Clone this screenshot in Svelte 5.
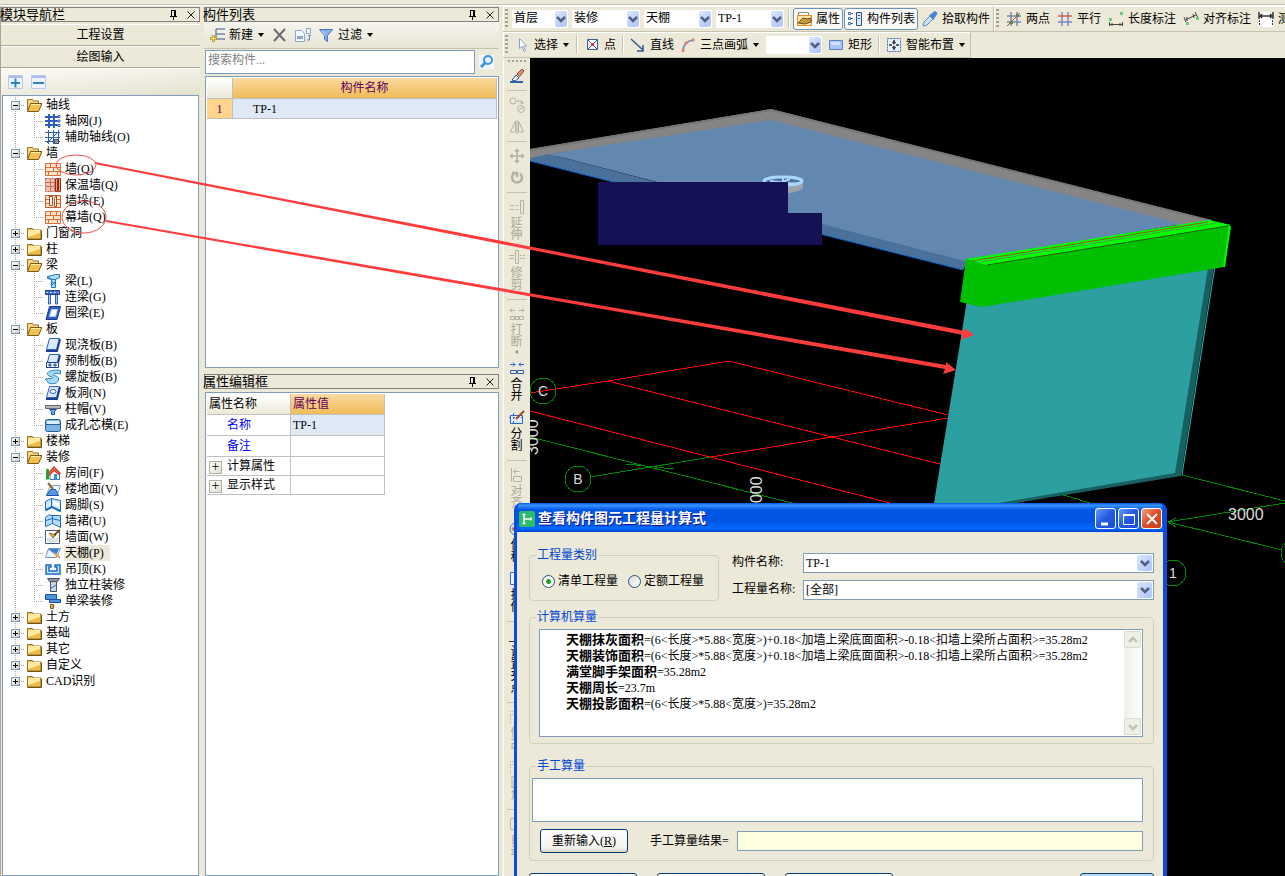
<script>
  const brick = '<path fill="#fbe3cc" stroke="#d8703c" d="M.5 2.5h15v12H.5z"/><path stroke="#d8703c" d="M1 6.5h14M1 10.5h14M5.500 3v3M11.500 3v3M8.500 7v3M3.500 11v3M12.500 11v3"/>';
  const slab = '<path fill="#dbe9ff" stroke="#2f62c4" d="M4.500 1.500h10l-3 11h-10z"/><path stroke="#1c3f96" stroke-width="2" d="M1 14h11l3-12"/>';

  const icons = {
    folder: '<path fill="#f0bc48" stroke="#96702a" d="M1.500 3.500h5l1 1.500h7.500v9h-13.500z"/><path fill="#fde9a0" d="M2 5h12v3L2 12z"/><path stroke="#6f5014" d="M1.500 14.500h14V6"/>',
    folderOpen: '<path fill="#f7d87c" stroke="#96702a" d="M1.500 13.500v-11h5l1 1.500h5v3"/><path fill="#f3c252" stroke="#7a5818" d="M1.500 14.500l3-8h11.500l-3.500 8z"/><path stroke="#fdf0b6" d="M5 7.500h9"/>',
    grid: '<path stroke="#2c5cc0" stroke-width="2" d="M4 1v14M9 1v14M0 4h13M0 8h13M0 12h13"/><path fill="#fff" stroke="#2c5cc0" d="M13 2.500h2v2h-2zM13 7h2v2h-2zM13 11.500h2v2h-2z"/>',
    auxGrid: '<path stroke="#2c5cc0" d="M3.500 1v14M8.500 1v14M13.500 1v14M0 3.500h15M0 8.500h15M0 12.500h15M2 14L13 3"/><path fill="#8a9ab8" stroke="#445" d="M9.500 10.500h4v4h-4z"/>',
    brick,
    brickCut: '<path fill="#edc0b0" stroke="#b85a4a" stroke-dasharray="2 1" d="M.5 1.500h9v13h-9z"/><path stroke="#c87058" d="M1 5.500h8M1 9.500h8M5.500 2v12"/><path fill="#f0a080" stroke="#8e2c18" d="M10.500 1.500h2v13h-2zM13.500 1.500h2v13h-2z"/>',
    pier: '<path fill="#fbe3cc" stroke="#c85a2c" d="M.5 2.500h15v12H.5z"/><path fill="#fff" stroke="#b04820" d="M4.500 3.500h3v9h-3zM9.500 5.500l2-3v11h-2z"/><path stroke="#d8703c" d="M1 6.500h3M1 10.500h3M12 6.500h3M12 10.500h3"/>',
    beam: '<path fill="#a8dcf8" stroke="#1c78c0" d="M2.500 3.500l8-2h4v3l-4 2v8h-4v-8l-4-1z"/><path stroke="#1c78c0" d="M3 4l4 2.500h4M7 9l4 3M7 12l4-4"/>',
    linkBeam: '<path fill="#3c6ad0" stroke="#1c3f96" d="M.5 1.500h14v4H.5z"/><path fill="#a8c8f8" stroke="#2f62c4" d="M3.500 6v9h2V6M10.500 6v9h2V6"/><path stroke="#cfe0ff" stroke-dasharray="2 2" d="M1 3.500h13"/>',
    ringBeam: '<path fill="#2f5ec8" stroke="#17388c" d="M4.500 1.500h11l-3.500 13h-11z"/><path fill="#fff" stroke="#a8c8f8" d="M6.500 4.500h6l-2 7h-6z"/>',
    slab,
    precast: slab + '<path fill="#fff" stroke="#1c3f96" d="M1.500 9.500h12v5h-12zM4 11h2v2H4zM9 11h2v2H9z"/>',
    spiral: '<path fill="#a4dcfa" stroke="#2080cc" d="M15.500 1.500c-6-1-13 0-13 3.500 0 3 6 2 5 4-1 1.500-4 0-7 1l3 4c5 2 10 0 10-4 0-4-7-3-5-5 1-1 4-1 7 0z"/>',
    slabHole: slab + '<ellipse cx="8" cy="6.500" rx="3" ry="2" fill="#fff" stroke="#2f62c4"/>',
    cap: '<path fill="#b8b8b8" stroke="#686868" d="M.5 4.500h15v3H.5z"/><path fill="#6aa4f0" stroke="#1c50b0" d="M4.500 8.500h7l-2 2v3h-3v-3z"/>',
    core: '<rect x=".5" y="2.500" width="15" height="12" rx="2" fill="#7ab4e6" stroke="#2c5c94"/><path fill="#dcefff" d="M2 4h12v3H2z"/><path stroke="#2c5c94" d="M1 7.500h14"/>',
    room: '<path fill="#fff" stroke="#3a78b8" d="M5 7v7.500h9.500V7L9 3z"/><path fill="#e85a44" stroke="#d0301c" d="M2.500 9L9 1.500 15.500 8.500l-2 1L9 5.500 5 10z"/><path fill="#2c9c3c" d="M1 5q2-3 3 0v9.500H1z"/><path fill="#3a8ae0" d="M9 9h3v6H9z"/>',
    floor: '<path fill="#e8f3ff" stroke="#8aa" d="M1.500 13.500l4-9h10l-3 9z"/><path fill="#5a96e8" stroke="#1c50b0" d="M1.500 14.500l4-6h5l3 6z"/><path stroke="#8c6a2c" stroke-width="2" d="M3 2l5 6"/>',
    skirting: '<path fill="#cfe6ff" stroke="#1c6cc0" d="M.5 4.500l6-3v8l-6 4zM6.500 1.500l9 2v11l-9-5z"/><path fill="#fff" d="M8 4l6 2v4L8 8z"/><path stroke="#1c6cc0" stroke-width="2" d="M1 13l6-3 8 4"/>',
    dado: '<path fill="#b4dcfa" stroke="#1c6cc0" d="M.5 4.500q3-4 7-2h8v12l-8-4-7 3z"/><path stroke="#1c6cc0" d="M7.500 2v9M1 7.500l6-2 8 2"/>',
    wallFace: '<path fill="#fff" stroke="#445a7c" d="M.5 1.500h14v13H.5z"/><path fill="#d8e0e8" d="M2 9h11v4H2z"/><path fill="#e0b850" stroke="#8c6a2c" d="M4 4l4 5 3-3z"/><path stroke="#6c4a1c" stroke-width="2" d="M9 6l6-5"/>',
    ceiling: '<path fill="#e8f3ff" stroke="#7a92a8" d="M.5 12.500l3-9h12l-4 9z"/><path fill="#3c7ae0" d="M3 4h11l-3 6z"/><path stroke="#d8a848" stroke-width="2" d="M9 8l6 5"/>',
    suspended: '<path fill="#cfe6ff" stroke="#1c6cc0" stroke-width="1.500" d="M1 4h5v2H4v4h8V6h-2V4h5v9H1z"/>',
    column: '<path fill="#8e98a4" stroke="#48525e" d="M2.500 1.500h12l-2 3h-8z"/><path fill="#c8d4e0" stroke="#48525e" d="M5.500 4.500h6v10h-6z"/><path stroke="#2c6cc8" d="M5 12l6-4"/>',
    beamFinish: '<path fill="#4a94dc" stroke="#1c50a0" d="M.5 1.500h11v5H.5zM4.500 6.500h11v3h-11z"/><path fill="#e0a860" stroke="#8c5a1c" d="M5.500 11.500h3v4h-3z"/>',
    plus: '<path fill="#eef3fc" stroke="#b9c9ea" d="M.5 1.500h14v13H.5z"/><path fill="#a9bdf0" d="M1 2h13v2H1z"/><path stroke="#2c84c8" stroke-width="2" d="M3 9h9M7.500 4.500v9"/>',
    minus: '<path fill="#eef3fc" stroke="#b9c9ea" d="M.5 1.500h14v13H.5z"/><path fill="#a9bdf0" d="M1 2h13v2H1z"/><path stroke="#2c84c8" stroke-width="2" d="M2 9h11"/>',
    add: '<path stroke="#7088a8" stroke-width="1.500" d="M7 2h9M7 7h9M7 12h9M7 2v10"/><path fill="#fbe38a" stroke="#c0982c" d="M3.500 8.500h2v2h2v2h-2v2h-2v-2h-2v-2h2z"/>',
    remove: '<path stroke="#6c6c6c" stroke-width="2" d="M2 2l11 12M13 2L2 14"/>',
    copyTo: '<path fill="#f4f8ff" stroke="#8ca4cc" d="M.5 3.500h6l3 3v8h-9zM11.500 1.500h4v5h-4z"/><path fill="#8ca4cc" d="M2 9h6v3H2z"/><path stroke="#6888c0" d="M12 13h2.500V9M13 8.500h3"/>',
    funnel: '<path fill="#86aef0" stroke="#4a74c4" d="M1.500 2.500h13l-5 6v6l-3-2v-4z"/><path stroke="#d4e4ff" d="M4 4l3.500 4"/>',
    search: '<path fill="#f0f6ff" d="M0 1h15v14H0z"/><circle cx="9" cy="6" r="4" fill="#e4f2ff" stroke="#3a94e0" stroke-width="2"/><path stroke="#3a94e0" stroke-width="3" d="M6 9l-4 4"/>',
    props: '<path fill="#fff" stroke="#8a8a8a" d="M2.500 1.500h10v4h-10z"/><path fill="#ffe2a8" stroke="#e08a20" d="M1.500 4.500h14v10h-14z"/><path fill="#c89a3c" stroke="#6a5420" d="M2 12l5-5 4 1 4-1v4l-6 2z"/>',
    list: '<path stroke="#3c6cb4" stroke-dasharray="2 1" d="M1 2.500h6M1 7.500h6M1 12.500h6"/><path fill="#fff" stroke="#3c6cb4" d="M1.500 1.500h2v2h-2zM1.500 6.500h2v2h-2zM1.500 11.500h2v2h-2z"/><path fill="#dce8fc" stroke="#2c4c94" d="M9.500 1.500h5v13h-5z"/><path stroke="#2c4c94" d="M11 4.500h2M11 7.500h2"/>',
    picker: '<path fill="#cfe4fb" stroke="#5a8cc8" d="M1 15l1-4 6-6 3 3-6 6z"/><path fill="#4a84d0" d="M7 4l2-1 3-2.500c2-1 4 1 3 3L12.500 7l-.5 2z"/>',
    twoPoint: '<path stroke="#7c84b8" stroke-width="1.500" d="M5 1v14M11 1v14M1 5h14M1 11h14"/><path stroke="#e03838" d="M1 15L14 2"/><path fill="#5a8a3c" d="M4 10h3v3H4zM10 3h3v3h-3z"/>',
    parallel: '<path stroke="#7c84c8" stroke-width="1.500" d="M5 1v14M11 1v14M1 11h14"/><path stroke="#e05858" stroke-width="1.500" d="M1 5h14"/>',
    lengthDim: '<path fill="#6cc87c" d="M1 7h3v3H1zM12 1h3v3h-3z"/><path stroke="#444" d="M1.500 11v4M14.500 11v4M1.500 13.500h13M4 12v3M12 12v3"/>',
    alignDim: '<path stroke="#444" d="M2 9l11-5M1 6l2 5M12 1l3 6M4 6v4M10 3l1 4"/><path fill="#6cc87c" d="M3 11h3v3H3zM13 6h3v3h-3z"/>',
    measure: '<path fill="#fff" d="M0 1h16v15H0z"/><path stroke="#333" stroke-width="1.500" d="M1 1v7M15 1v7M1 5h14M4 3L2 5l2 2M12 3l2 2-2 2"/><path stroke="#333" stroke-dasharray="2 1" d="M1.500 9v6M14.500 9v6"/>',
    cursor: '<path fill="#fff" stroke="#8ca0c4" d="M5.500 1.500v10l2.500-2 2 5 1.500-1-2-4.500h3z"/>',
    point: '<path fill="#f4f8ff" stroke="#3c5c94" d="M3.500 2.500h10v10h-10z"/><path stroke="#3c5c94" d="M4 3l9 9M13 3l-9 9"/><path fill="#e03838" d="M7 6h3v3H7z"/>',
    line: '<path stroke="#34588c" stroke-width="1.500" d="M1 2l12 11M13 8v6H7"/>',
    arc: '<path stroke="#6c84a8" stroke-width="1.500" d="M3 14q0-9 10-11"/><path fill="#f8d0c8" stroke="#e07060" d="M2 12.500h2v2H2zM5 5h2v2H5zM12 2h2v2h-2z"/>',
    rect: '<path fill="#a8c4fa" stroke="#5a84d0" d="M1.500 3.500h13v9h-13z"/><path fill="#d4e4ff" d="M3 5h9v3H3z"/>',
    smart: '<path fill="#e4eefc" stroke="#4c6ca8" stroke-dasharray="2 1" d="M1.500 1.500h13v13h-13z"/><path stroke="#333" stroke-width="1.500" d="M8 3v3M8 10v3M3 8h3M10 8h3M6.500 5L8 6.500 9.500 5M6.500 11L8 9.500 9.500 11"/>',
    eraser: '<path stroke="#2c64b4" stroke-width="2" d="M1 14h13"/><path fill="#fff" stroke="#2c4c94" d="M3 12l4-5 3 3-4 3z"/><path fill="#f08a70" stroke="#7a4a3c" d="M8 6l5-5 2 2-4.500 5.500z"/>',
    copy: '<circle cx="4" cy="4" r="3"/><circle cx="12" cy="12" r="3.500"/><path d="M8 4h5v3M11 5l2 2 2-2M10 13l4-3"/>',
    mirror: '<path d="M6.500 2v11h-5zM9.500 2v11h5zM8 1v14"/>',
    move: '<path stroke-width="1.500" d="M8 1v14M1 8h14M6 3.500l2-2 2 2M6 12.500l2 2 2-2M3.500 6l-2 2 2 2M12.500 6l2 2-2 2"/>',
    rotate: '<path stroke-width="2.500" d="M11 3.500a5 5 0 1 1-6 0M3 3h5v4"/>',
    extend: '<path d="M1 6.500h4M1 10.500h4M7 6.500h2M7 10.500h2M11.500 1.500h3v13h-3z"/>',
    trim: '<path d="M0 6.500h5M0 9.500h5M6.500 1.500h3v13h-3zM11 6.500h2M14 6.500h2M11 9.500h2M14 9.500h2"/>',
    breakUp: '<path d="M1 4.500h5M3 2.500l-2 2 2 2M10 4.500h5M13 2.500l2 2-2 2M1.500 10.500h4v3h-4zM6.500 10.500h3v3h-3zM10.500 10.500h4v3h-4z"/>',
    merge: '<path stroke="#2c64d0" d="M1 4.500h5M4 2.500l2 2-2 2M10 4.500h5M12 2.500l-2 2 2 2"/><path fill="#dfeafc" stroke="#3c5c94" d="M1.500 10.500h6v3h-6zM8.500 10.500h6v3h-6z"/>',
    split: '<path fill="#dfeafc" stroke="#2c64d0" d="M1.500 5.500h12v8h-12z"/><path stroke="#2c64d0" stroke-dasharray="2 2" d="M0 7.500h15M4.500 3v12"/><path stroke="#9c4c20" stroke-width="2" d="M7 9l8-8"/>',
    align: '<path d="M2.500 1v14M4.500 9.500h8v5h-8zM4.500 4.500h6M7 2L4.500 4.500 7 7"/>',
    offset: '<circle cx="7" cy="8" r="6" stroke="#4c6ca8"/><circle cx="5" cy="8" r="2" fill="#e03838"/>',
    stretch: '<path fill="#eaf2ff" stroke="#3c6cb4" d="M1.500 1.500h12v12h-12z"/>',
    grip: '<path stroke="#333" d="M0 13.500h14M7 8v5"/>',
    dotted: '<path stroke-dasharray="1 1" d="M1 2.500h12M1 5.500h10M1.500 6v9"/>',
    block: '<path d="M1.500 2.500h12v11h-12z"/>',
    down: '<path stroke="#4d6185" stroke-width="2.500" d="M4 6l4 4 4-4"/>',
    scrollUp: '<path stroke="#c3c3b5" stroke-width="2.500" d="M4 10l4-4 4 4"/>',
    scrollDown: '<path stroke="#c3c3b5" stroke-width="2.500" d="M4 6l4 4 4-4"/>',
    pin: '<path stroke="#000" d="M5.500 3v6M6 3.500h4M4 9.500h7M7.500 10v3"/><path stroke="#000" stroke-width="2" d="M9 3v6"/>',
    close: '<path stroke="#222" d="M4.500 4.500l7 7M11.500 4.500l-7 7"/>',
    app: '<rect x="0" y="0" width="16" height="16" rx="2" fill="#2cbc6c"/><path stroke="#fff" stroke-width="1.500" d="M5 3v10M5 8h7M3.500 3.500h3M3.500 12.500h3M12 6.500v3"/>',
    winMin: '<path stroke="#fff" stroke-width="3" d="M3 13h7"/>',
    winMax: '<path stroke="#fff" d="M2.500 3.500h11v10h-11z"/><path stroke="#fff" stroke-width="2" d="M2 4h12"/>',
    winClose: '<path stroke="#fff" stroke-width="2" d="M3 3l10 10M13 3L3 13"/>'
  };

  const tree = $state([
    { label: '轴线', open: true, items: [['grid', '轴网(J)'], ['auxGrid', '辅助轴线(O)']] },
    {
      label: '墙',
      open: true,
      items: [['brick', '墙(Q)'], ['brickCut', '保温墙(Q)'], ['pier', '墙垛(E)'], ['brick', '幕墙(Q)']]
    },
    { label: '门窗洞', open: false },
    { label: '柱', open: false },
    { label: '梁', open: true, items: [['beam', '梁(L)'], ['linkBeam', '连梁(G)'], ['ringBeam', '圈梁(E)']] },
    {
      label: '板',
      open: true,
      items: [
        ['slab', '现浇板(B)'],
        ['precast', '预制板(B)'],
        ['spiral', '螺旋板(B)'],
        ['slabHole', '板洞(N)'],
        ['cap', '柱帽(V)'],
        ['core', '成孔芯模(E)']
      ]
    },
    { label: '楼梯', open: false },
    {
      label: '装修',
      open: true,
      items: [
        ['room', '房间(F)'],
        ['floor', '楼地面(V)'],
        ['skirting', '踢脚(S)'],
        ['dado', '墙裙(U)'],
        ['wallFace', '墙面(W)'],
        ['ceiling', '天棚(P)'],
        ['suspended', '吊顶(K)'],
        ['column', '独立柱装修'],
        ['beamFinish', '单梁装修']
      ]
    },
    { label: '土方', open: false },
    { label: '基础', open: false },
    { label: '其它', open: false },
    { label: '自定义', open: false },
    { label: 'CAD识别', open: false }
  ]);

  // null is a separator
  const editTools = [
    { icon: 'eraser', on: true, title: '删除' },
    null,
    { icon: 'copy', title: '复制' },
    { icon: 'mirror', title: '镜像' },
    null,
    { icon: 'move', title: '移动' },
    { icon: 'rotate', title: '旋转' },
    null,
    { icon: 'extend', text: '延伸' },
    { icon: 'trim', text: '修剪' },
    null,
    { icon: 'breakUp', text: '打断', menu: true },
    { icon: 'merge', text: '合并', on: true },
    { icon: 'split', text: '分割', on: true },
    null,
    { icon: 'align', text: '对齐', menu: true },
    { icon: 'offset', text: '偏移', on: true },
    { icon: 'stretch', text: '拉伸', on: true },
    null,
    { icon: 'grip', text: '设置夹点', on: true },
    null,
    { icon: 'dotted', text: '修改' },
    { icon: 'dotted', text: '圆角' },
    null,
    { icon: 'block', text: '自动' }
  ];

  const results = [
    ['天棚抹灰面积', '=(6<长度>*5.88<宽度>)+0.18<加墙上梁底面面积>-0.18<扣墙上梁所占面积>=35.28m2'],
    ['天棚装饰面积', '=(6<长度>*5.88<宽度>)+0.18<加墙上梁底面面积>-0.18<扣墙上梁所占面积>=35.28m2'],
    ['满堂脚手架面积', '=35.28m2'],
    ['天棚周长', '=23.7m'],
    ['天棚投影面积', '=(6<长度>*5.88<宽度>)=35.28m2']
  ];

  let selected = $state('天棚(P)');
  let kind = $state('bill');
</script>

{#snippet icon(name)}
  <svg class="icon" viewBox="0 0 16 16" fill="none" aria-hidden="true">{@html icons[name]}</svg>
{/snippet}

{#snippet combo(value, label, id)}
  <span class="combo">
    <select {id} aria-label={label}><option>{value}</option></select>
    <span class="arrow">{@render icon('down')}</span>
  </span>
{/snippet}

{#snippet tool(name, text, menu)}
  <button class="tool" aria-label={text}>
    {@render icon(name)}
    {#if text}<span>{text}</span>{/if}
    {#if menu}<i class="caret"></i>{/if}
  </button>
{/snippet}

{#snippet caption(text)}
  <header class="caption">
    <h2>{text}</h2>
    <button aria-label="固定">{@render icon('pin')}</button>
    <button aria-label="关闭">{@render icon('close')}</button>
  </header>
{/snippet}

<div class="app">
  <div class="strip"></div>

  <div class="columns">
    <nav class="navigator">
      {@render caption('模块导航栏')}
      <button class="section">工程设置</button>
      <button class="section">绘图输入</button>
      <div class="tree-tools">
        <button aria-label="展开">{@render icon('plus')}</button>
        <button aria-label="折叠">{@render icon('minus')}</button>
      </div>
      <ul class="tree">
        {#each tree as group}
          <li>
            <div class="branch">
              <button
                class="toggle"
                class:open={group.open}
                aria-label={group.label}
                aria-expanded={group.open}
                onclick={() => (group.open = !group.open)}
              ></button>
              {@render icon(group.open ? 'folderOpen' : 'folder')}
              <span>{group.label}</span>
            </div>
            {#if group.open && group.items}
              <ul>
                {#each group.items as [name, label]}
                  <li class="leaf">
                    {@render icon(name)}
                    <button class:selected={selected === label} onclick={() => (selected = label)}>{label}</button>
                  </li>
                {/each}
              </ul>
            {/if}
          </li>
        {/each}
      </ul>
    </nav>

    <aside class="panels">
      <section class="components">
        {@render caption('构件列表')}
        <div class="list-tools">
          {@render tool('add', '新建', true)}
          <button class="tool" aria-label="删除">{@render icon('remove')}</button>
          <button class="tool" aria-label="复制">{@render icon('copyTo')}</button>
          {@render tool('funnel', '过滤', true)}
        </div>
        <div class="search">
          <input type="text" placeholder="搜索构件..." aria-label="搜索构件" />
          <button aria-label="搜索">{@render icon('search')}</button>
        </div>
        <div class="sheet">
          <table class="names">
            <thead>
              <tr><th class="corner"></th><th class="hot">构件名称</th></tr>
            </thead>
            <tbody>
              <tr><td class="num">1</td><td class="current">TP-1</td></tr>
            </tbody>
          </table>
        </div>
      </section>

      <section class="properties">
        {@render caption('属性编辑框')}
        <div class="sheet">
          <table class="props">
            <thead>
              <tr><th class="corner">属性名称</th><th class="hot">属性值</th></tr>
            </thead>
            <tbody>
              <tr><td class="blue">名称</td><td class="current">TP-1</td></tr>
              <tr><td class="blue">备注</td><td></td></tr>
              <tr class="more"><td><button aria-label="展开计算属性">+</button>计算属性</td><td></td></tr>
              <tr class="more"><td><button aria-label="展开显示样式">+</button>显示样式</td><td></td></tr>
            </tbody>
          </table>
        </div>
      </section>
    </aside>

    <main>
      <div class="bars">
        <div class="bar pick">
          <i class="handle"></i>
          {@render combo('首层', '楼层')}
          {@render combo('装修', '类别')}
          {@render combo('天棚', '构件类型')}
          {@render combo('TP-1', '构件')}
          <i class="sep"></i>
          <div class="pressed">
            {@render tool('props', '属性')}
            {@render tool('list', '构件列表')}
          </div>
          {@render tool('picker', '拾取构件')}
        </div>
        <div class="bar dims">
          <i class="handle"></i>
          {@render tool('twoPoint', '两点')}
          {@render tool('parallel', '平行')}
          {@render tool('lengthDim', '长度标注')}
          {@render tool('alignDim', '对齐标注')}
          {@render tool('measure', '测量距离')}
        </div>
      </div>
      <div class="bars">
        <div class="bar draw">
          <i class="handle"></i>
          {@render tool('cursor', '选择', true)}
          <i class="sep"></i>
          {@render tool('point', '点')}
          <i class="sep"></i>
          {@render tool('line', '直线')}
          {@render tool('arc', '三点画弧', true)}
          {@render combo('', '画弧方式')}
          {@render tool('rect', '矩形')}
          <i class="sep"></i>
          {@render tool('smart', '智能布置', true)}
        </div>
      </div>

      <div class="work">
        <div class="edit-bar">
          <i class="handle flat"></i>
          {#each editTools as item}
            {#if item}
              <button class="edit" class:on={item.on} aria-label={item.text ?? item.title}>
                {@render icon(item.icon)}
                {#if item.text}<span>{item.text}</span>{/if}
                {#if item.menu}<i class="side-caret"></i>{/if}
              </button>
            {:else}
              <i class="rule"></i>
            {/if}
          {/each}
        </div>

        <svg class="scene" role="img" aria-label="三维视图">
          <g transform="translate(-530 -58)" fill="none">
            <g shape-rendering="crispEdges">
              <path stroke="#f00" d="M530 393L608 381 729 361 948 415M608 381L940 464M530 411L890 503M948 418L711 457" />
              <path
                stroke="#008a00"
                d="M711 457L590 477M530 437L792 503M626 464L674 469M1182 475L1285 501M1060 494L1090 503M1168 522L1285 503M1168 522L1282 550M1168 522l8 -4M1168 522l8 5"
              />
              <circle cx="543" cy="391" r="13" stroke="#008a00" />
              <circle cx="578" cy="479" r="13" stroke="#008a00" />
              <circle cx="1173" cy="573" r="13" stroke="#008a00" />
              <circle cx="1294" cy="553" r="13" stroke="#008a00" />
            </g>
            <path fill="#858585" d="M530 149L771 109 1212 221 1180 226 771 121 530 161z" />
            <path fill="#6388b0" d="M549 154L771 120 1182 224 966 262z" />
            <path fill="#4a7199" d="M530 158L549 154 656 182 822 224 968 262 963 270 530 161z" />
            <path stroke="#0a62c8" d="M530 161L963 270" />
            <path stroke="#777" stroke-width="2" d="M530 150L771 110 1212 221" />
            <path fill="#9aa4ae" d="M764 182v7q18 9 39 0v-6z" />
            <ellipse cx="783" cy="181" rx="19" ry="4" fill="#4a7199" stroke="#a9d6ff" stroke-width="3" />
            <path stroke="#a9d6ff" stroke-width="2" d="M783 177v10M770 181l26 3M790 179l-14 6" />
            <path fill="#141255" d="M598 182H788V213H822V245H598z" />
            <path fill="#2ca0a0" d="M967 300L1210 265 1177 475 1002 503H934z" />
            <path fill="#176060" d="M1208 268L1214 266 1181 476 1016 503H999L1175 473z" />
            <path stroke="#35b5b5" d="M1215 266L1182 475" />
            <path fill="#00c000" d="M966 259L1230 225 1224 267 982 307 960 302z" />
            <path fill="#0f0" d="M966 259L1209 220 1231 225 987 265z" />
            <path stroke="#8a5a00" d="M972 261L1208 222" />
            <path stroke="#4e9a4e" d="M980 262L1216 223" />
            <path stroke="#245c00" d="M987 265L1228 226" />
            <path stroke="#0f0" stroke-width="2" d="M1230 226L1224 267" />
            <g class="marks">
              <text x="543" y="396" text-anchor="middle">C</text>
              <text x="578" y="484" text-anchor="middle">B</text>
              <text x="1173" y="578" text-anchor="middle">1</text>
              <text class="big" x="1228" y="520">3000</text>
              <text class="big" transform="translate(538 455) rotate(-90)">3000</text>
              <text class="big" transform="translate(762 512) rotate(-90)">3000</text>
            </g>
          </g>
        </svg>
      </div>
    </main>
  </div>

  <div class="dialog" role="dialog" aria-labelledby="dialog-title">
    <header>
      {@render icon('app')}
      <h1 id="dialog-title">查看构件图元工程量计算式</h1>
      <button aria-label="最小化">{@render icon('winMin')}</button>
      <button aria-label="最大化">{@render icon('winMax')}</button>
      <button class="quit" aria-label="关闭">{@render icon('winClose')}</button>
    </header>

    <div class="body">
      <div class="top">
        <fieldset class="kind">
          <legend>工程量类别</legend>
          <div class="radios">
            <label><input type="radio" value="bill" bind:group={kind} />清单工程量</label>
            <label><input type="radio" value="quota" bind:group={kind} />定额工程量</label>
          </div>
        </fieldset>
        <div class="fields">
          <label for="part">构件名称:</label>
          {@render combo('TP-1', '构件名称', 'part')}
          <label for="amount">工程量名称:</label>
          {@render combo('[全部]', '工程量名称', 'amount')}
        </div>
      </div>

      <fieldset class="machine">
        <legend>计算机算量</legend>
        <div class="output">
          <div class="lines">
            {#each results as [name, formula]}
              <p><b>{name}</b>{formula}</p>
            {/each}
          </div>
          <div class="scroll">
            <button disabled aria-label="向上">{@render icon('scrollUp')}</button>
            <button disabled aria-label="向下">{@render icon('scrollDown')}</button>
          </div>
        </div>
      </fieldset>

      <fieldset class="manual">
        <legend>手工算量</legend>
        <textarea aria-label="手工算量"></textarea>
        <div class="sum">
          <button class="push">重新输入(<u>R</u>)</button>
          <label for="sum">手工算量结果=</label>
          <input id="sum" type="text" readonly />
        </div>
      </fieldset>

      <div class="actions">
        <button class="push" aria-label="查看计算规则"></button>
        <button class="push" aria-label="查看三维扣减图"></button>
        <button class="push" aria-label="显示详细计算式"></button>
        <button class="push focus" aria-label="关闭"></button>
      </div>
    </div>
  </div>

  <svg class="notes" fill="none" aria-hidden="true">
    <g stroke="#f05050">
      <ellipse cx="76" cy="165" rx="20" ry="10" />
      <ellipse cx="84" cy="217" rx="22" ry="16" />
    </g>
    <g fill="#ff3c3c">
      <path d="M95 162L965 331V328L974 335 961 340 963 335 95 164z" />
      <path d="M106 220L946 365V362L956 370 943 374 945 369 106 222z" />
    </g>
  </svg>
</div>

<style>
  :global(body) {
    margin: 0;
  }

  .app {
    position: relative;
    display: flex;
    flex-direction: column;
    height: 100vh;
    overflow: hidden;
    background: #ece9d8;
    color: #000;
    font: 12px/16px 'Liberation Serif', 'Noto Sans CJK SC', serif;
  }

  .app :is(button, input, select, textarea) {
    font: inherit;
    color: inherit;
    box-sizing: border-box;
    margin: 0;
  }

  button {
    padding: 0;
    border: 0;
    background: none;
    white-space: nowrap;
  }

  .icon {
    display: block;
    flex: none;
    width: 16px;
    height: 16px;
  }

  .strip {
    flex: none;
    height: 6px;
    box-sizing: border-box;
    border-bottom: 1px solid #fff;
    box-shadow: inset 0 -1px #c5c2b0;
  }

  .columns {
    flex: 1;
    min-height: 0;
    display: flex;
  }

  .navigator {
    flex: none;
    width: 200px;
    display: flex;
    flex-direction: column;
    padding-top: 1px;
    box-sizing: border-box;
    border-left: 1px solid #aca899;
  }

  .caption {
    flex: none;
    display: flex;
    align-items: center;
    height: 15px;
    box-sizing: border-box;
    border: 1px solid #808080;
  }

  .caption h2 {
    flex: 1;
    margin: 0 0 0 -2px;
    font-size: 13px;
    font-weight: normal;
    line-height: 13px;
  }

  .caption button {
    margin-left: 1px;
  }

  .section {
    flex: none;
    height: 22px;
    border-top: 1px solid #fff;
    border-bottom: 1px solid #aca899;
  }

  .caption + .section {
    margin-top: 2px;
  }

  .tree-tools {
    flex: none;
    display: flex;
    align-items: center;
    gap: 7px;
    height: 27px;
    padding-left: 7px;
    background: linear-gradient(175deg, #fbfaf6, #eceadc 70%, #e2dfca);
    border-top: 1px solid #fff;
    box-sizing: border-box;
  }

  .tree,
  .tree ul {
    margin: 0;
    padding: 0;
    list-style: none;
  }

  .tree {
    flex: 1;
    margin: 0 1px;
    padding-top: 1px;
    background: #fff;
    border: 1px solid #7f9db9;
    overflow: hidden;
  }

  .tree > li {
    background: repeating-linear-gradient(#a8a898 0 1px, #fff 1px 2px) 12px 0 / 1px 100% no-repeat;
  }

  .tree > li:last-child {
    background-size: 1px 8px;
  }

  .branch {
    display: flex;
    align-items: center;
    height: 16px;
    padding-left: 8px;
    background: repeating-linear-gradient(90deg, #a8a898 0 1px, #fff 1px 2px) 12px 8px / 10px 1px no-repeat;
  }

  .branch .icon {
    margin: 0 4px 0 6px;
  }

  .toggle {
    width: 9px;
    height: 9px;
    border: 1px solid #7b9cb8;
    background:
      linear-gradient(#000, #000) center / 5px 1px no-repeat,
      linear-gradient(#000, #000) center / 1px 5px no-repeat,
      linear-gradient(135deg, #fff, #d2cfbe);
  }

  .toggle.open {
    background:
      linear-gradient(#000, #000) center / 5px 1px no-repeat,
      linear-gradient(135deg, #fff, #d2cfbe);
  }

  .leaf {
    display: flex;
    align-items: center;
    height: 16px;
    padding-left: 42px;
    background:
      repeating-linear-gradient(#a8a898 0 1px, #fff 1px 2px) 31px 0 / 1px 100% no-repeat,
      repeating-linear-gradient(90deg, #a8a898 0 1px, transparent 1px 2px) 31px 8px / 10px 1px no-repeat;
  }

  .leaf:last-child {
    background-size:
      1px 8px,
      10px 1px;
  }

  .leaf button {
    margin-left: 3px;
    padding: 0 6px 0 1px;
    line-height: 16px;
  }

  .leaf button.selected {
    background: #ece9d8;
  }

  .panels {
    flex: none;
    width: 295px;
    margin: 0 4px;
    display: flex;
    flex-direction: column;
    padding-top: 1px;
    box-sizing: border-box;
  }

  .components {
    flex: 361;
    display: flex;
    flex-direction: column;
    min-height: 0;
  }

  .properties {
    flex: 502;
    display: flex;
    flex-direction: column;
    min-height: 0;
    margin-top: 6px;
  }

  .properties .sheet {
    margin-top: 3px;
  }

  .list-tools {
    flex: none;
    display: flex;
    align-items: center;
    gap: 7px;
    height: 27px;
    padding-left: 5px;
    background: linear-gradient(#f6f5ee, #e8e5d4);
    border-bottom: 1px solid #c5c2b0;
    box-sizing: border-box;
  }

  .tool {
    display: flex;
    align-items: center;
    gap: 4px;
    flex: none;
  }

  .caret {
    margin: 0 1px;
    border: 3px solid transparent;
    border-top: 4px solid #000;
    border-bottom: 0;
  }

  .search {
    flex: none;
    display: flex;
    align-items: center;
    gap: 4px;
    padding: 1px 4px 2px 1px;
  }

  .search input {
    flex: 1;
    min-width: 0;
    height: 24px;
    padding: 0 2px 4px;
    border: 1px solid #7f9db9;
    background: #fff;
    outline: 0;
  }

  .search input::placeholder {
    color: #808080;
    opacity: 1;
  }

  .sheet {
    flex: 1;
    min-height: 0;
    overflow: hidden;
    margin: 0 0 0 1px;
    padding: 1px;
    background: #fff;
    border: 1px solid #7f9db9;
  }

  table {
    border-collapse: separate;
    border-spacing: 0;
    table-layout: fixed;
  }

  th,
  td {
    box-sizing: border-box;
    height: 21px;
    padding: 0 2px;
    border: 0 solid #c0c0c0;
    border-width: 0 1px 1px 0;
    font-weight: normal;
    line-height: 16px;
    text-align: left;
  }

  .names {
    width: 100%;
  }

  .names td {
    height: 20px;
  }

  .corner {
    background: linear-gradient(#fff, #ece9d8);
  }

  .hot {
    background: linear-gradient(#fbd9a0, #f0bc58);
    color: #600060;
  }

  .names .corner {
    width: 26px;
  }

  .names .hot,
  .names .num {
    text-align: center;
  }

  .names .num {
    background: #ffd48c;
    color: #600060;
  }

  .current {
    background: #dfe9f6;
  }

  .names .current {
    padding-left: 20px;
  }

  .props {
    width: 178px;
  }

  .props .corner {
    width: 84px;
  }

  .props .blue {
    padding-left: 20px;
    color: #00f;
  }

  .props .more td {
    height: 19px;
  }

  .more button {
    width: 13px;
    height: 13px;
    margin-right: 5px;
    border: 1px solid #b0b0a0;
    background: linear-gradient(135deg, #fff, #e2dfd0);
    font-size: 14px;
    line-height: 10px;
    vertical-align: middle;
  }

  main {
    flex: 1;
    min-width: 0;
    display: flex;
    flex-direction: column;
  }

  .bars {
    flex: none;
    display: flex;
    height: 26px;
    overflow: hidden;
  }

  .bar {
    flex: none;
    display: flex;
    align-items: center;
    box-sizing: border-box;
    padding-left: 2px;
    border-right: 1px solid #c5c2b0;
    border-bottom: 1px solid #c5c2b0;
    box-shadow: inset 1px 1px #fff;
  }

  .handle {
    flex: none;
    width: 3px;
    height: 19px;
    background: repeating-linear-gradient(#a5a290 0 2px, transparent 2px 4px);
  }

  .handle.flat {
    width: 18px;
    height: 2px;
    margin-top: 2px;
    background: repeating-linear-gradient(90deg, #a5a290 0 2px, transparent 2px 4px);
  }

  .sep {
    flex: none;
    width: 1px;
    height: 19px;
    background: #c5c2b0;
    border-right: 1px solid #fff;
  }

  .pick {
    gap: 4px;
    padding-right: 3px;
  }

  .draw {
    gap: 6px;
    padding-right: 4px;
  }

  .dims {
    gap: 7px;
  }

  .combo {
    position: relative;
    display: block;
    width: 68px;
    height: 18px;
    flex: none;
  }

  .pick .combo:nth-child(2),
  .draw .combo {
    width: 56px;
  }

  .combo select {
    display: block;
    width: 100%;
    height: 100%;
    padding: 0 20px 2px 2px;
    appearance: none;
    border: 0;
    border-radius: 0;
    background: #fff;
  }

  .combo .arrow {
    position: absolute;
    top: 1px;
    right: 1px;
    bottom: 1px;
    width: 12px;
    overflow: hidden;
    display: flex;
    align-items: center;
    justify-content: center;
    border-radius: 2px;
    background: linear-gradient(135deg, #dbe6fe, #adc4f8);
    pointer-events: none;
  }

  .pressed {
    display: flex;
    gap: 1px;
    margin-left: -1px;
  }

  .pressed .tool {
    height: 22px;
    padding: 0 2px;
    border: 1px solid #6a93b4;
    border-radius: 3px;
    background: #fbfaf6;
  }

  .work {
    flex: 1;
    min-height: 0;
    display: flex;
  }

  .edit-bar {
    flex: none;
    width: 27px;
    display: flex;
    flex-direction: column;
    align-items: center;
    gap: 6px;
    overflow: hidden;
    box-shadow: inset 1px 0 #fff;
  }

  .rule {
    flex: none;
    width: 20px;
    height: 1px;
    background: #c5c2b0;
  }

  .edit-bar .edit {
    flex: none;
    display: flex;
    flex-direction: column;
    align-items: center;
    color: #aca899;
    stroke: #b5b2a0;
  }

  .edit-bar .edit.on {
    color: #000;
  }

  .edit span {
    width: 12px;
    margin: 2px 0;
    line-height: 12px;
    white-space: normal;
    word-break: break-all;
  }

  .side-caret {
    border: 2px solid transparent;
    border-right: 3px solid #8c8a7c;
    border-left: 0;
  }

  .scene {
    flex: 1;
    min-width: 0;
    height: 100%;
    background: #000;
  }

  .marks {
    fill: #dcdcdc;
    font-family: 'Liberation Sans', sans-serif;
    font-size: 14px;
  }

  .marks .big {
    font-size: 16px;
  }

  .notes {
    position: absolute;
    inset: 0;
    width: 100%;
    height: 100%;
    pointer-events: none;
  }

  .dialog {
    position: absolute;
    top: 503px;
    right: 118px;
    bottom: 0;
    left: 514px;
    display: flex;
    flex-direction: column;
    border: solid #0a4be0;
    border-width: 0 4px 0 3px;
    border-radius: 7px 7px 0 0;
    background: #0a4be0;
    overflow: hidden;
  }

  .dialog header {
    flex: none;
    display: flex;
    align-items: center;
    gap: 2px;
    height: 29px;
    margin: 0 -4px 0 -3px;
    padding: 2px 5px 0 5px;
    box-sizing: border-box;
    background: linear-gradient(#0058e6, #3a93ff 8%, #0055e5 24%, #0054e3 60%, #026aff 88%, #0043cf);
  }

  .dialog h1 {
    flex: 1;
    margin: 0 0 0 1px;
    color: #fff;
    font-size: 14px;
    line-height: 20px;
    text-shadow: 1px 1px #0f1089;
  }

  .dialog header button {
    width: 21px;
    height: 21px;
    padding: 2px;
    border: 1px solid #fff;
    border-radius: 3px;
    background: linear-gradient(135deg, #6a9cf8, #2258e0 50%, #1c4cd0);
  }

  .dialog header .quit {
    background: linear-gradient(135deg, #f0a088, #e04a20 50%, #c83c14);
  }

  .body {
    flex: 1;
    min-height: 0;
    padding: 16px 9px 0 12px;
    background: #ece9d8;
    overflow: hidden;
  }

  fieldset {
    min-width: 0;
    margin: 0;
    padding: 0;
    border: 1px solid #d0d0bf;
    border-radius: 4px;
  }

  legend {
    margin-left: 6px;
    padding: 0 1px;
    color: #0046d5;
    line-height: 14px;
  }

  .top {
    display: flex;
    gap: 13px;
  }

  .kind {
    flex: none;
    width: 190px;
    box-sizing: border-box;
  }

  .radios {
    display: flex;
    gap: 10px;
    height: 38px;
    padding-left: 12px;
    align-items: center;
  }

  .radios label {
    display: flex;
    align-items: center;
    gap: 3px;
  }

  .radios input {
    appearance: none;
    width: 13px;
    height: 13px;
    border: 1px solid #1d5281;
    border-radius: 50%;
    background: linear-gradient(135deg, #dcdcd7, #fff);
  }

  .radios input:checked {
    background: radial-gradient(circle, #21a121 0 2px, #fff 3px);
  }

  .fields {
    flex: 1;
    display: grid;
    grid-template-columns: 71px 1fr;
    grid-auto-rows: 20px;
    row-gap: 7px;
    padding-top: 5px;
    line-height: 18px;
  }

  .fields .combo {
    width: auto;
    height: 20px;
  }

  .fields .combo select {
    border: 1px solid #7f9db9;
    padding-bottom: 0;
  }

  .fields .combo .arrow {
    top: 2px;
    right: 2px;
    bottom: 2px;
    width: 15px;
  }

  .machine {
    margin-top: 9px;
    padding: 5px 10px 6px 9px;
  }

  .machine legend {
    margin-left: -3px;
  }

  .output {
    display: flex;
    height: 108px;
    box-sizing: border-box;
    border: 1px solid #7f9db9;
    background: #fff;
  }

  .lines {
    flex: 1;
    padding: 2px 0 0 26px;
  }

  .lines p {
    margin: 0;
    line-height: 16px;
    white-space: nowrap;
  }

  .lines b {
    font-size: 13px;
  }

  .scroll {
    display: flex;
    flex-direction: column;
    justify-content: space-between;
    width: 17px;
    margin: 1px;
    background: linear-gradient(90deg, #f0f0ea, #fdfdfa);
  }

  .scroll button {
    height: 17px;
    border: 1px solid #dcdccc;
    border-radius: 2px;
    background: #f1f0e8;
    overflow: hidden;
  }

  .manual {
    margin-top: 15px;
    padding: 5px 10px 7px 2px;
  }

  .manual legend {
    margin-left: 4px;
  }

  textarea {
    display: block;
    width: 100%;
    height: 44px;
    border: 1px solid #7f9db9;
    border-radius: 0;
    background: #fff;
    resize: none;
  }

  .sum {
    display: flex;
    align-items: center;
    padding: 7px 0 0 8px;
  }

  .push {
    flex: none;
    width: 88px;
    height: 24px;
    border: 1px solid #003c74;
    border-radius: 3px;
    background: linear-gradient(#fff, #f3f2ec 80%, #dcd8cb);
  }

  .sum label {
    margin: 0 8px 0 22px;
  }

  .sum input {
    flex: 1;
    height: 20px;
    border: 1px solid #7f9db9;
    background: #ffffe1;
  }

  .actions {
    display: flex;
    gap: 20px;
    margin-top: 12px;
  }

  .actions .push {
    width: 108px;
  }

  .actions .focus {
    width: 74px;
    margin-left: auto;
    box-shadow: inset 0 2px #bcd4f6;
  }
</style>
